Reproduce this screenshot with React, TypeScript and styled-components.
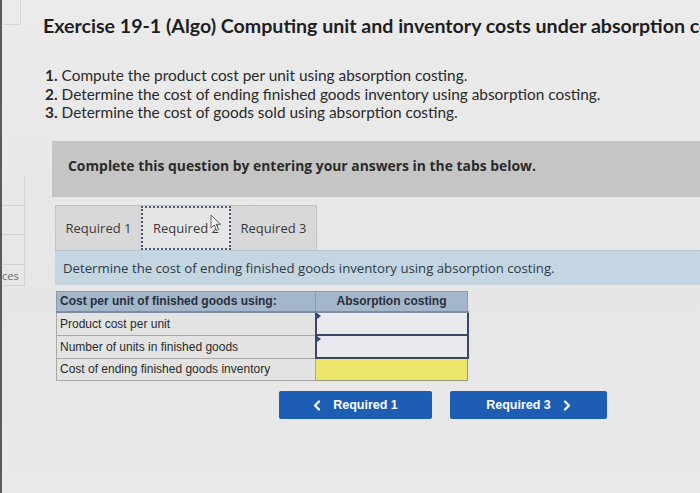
import React from 'react';
import styled, { createGlobalStyle } from 'styled-components';

const GlobalStyle = createGlobalStyle`
	html, body {
		margin: 0;
		padding: 0;
		background: #e7e7e7;
	}
	body {
		width: 700px;
		height: 493px;
		overflow: hidden;
		font-family: 'Lato', 'Liberation Sans', sans-serif;
		color: #222;
	}
`;

const Page = styled.div`
	display: flex;
	height: 493px;
	background: linear-gradient(180deg, #ebebeb 0%, #e6e6e6 60%, #e9e9e9 100%);
`;

const Rail = styled.aside`
	width: 23px;
	flex-shrink: 0;
	border-left: 2px solid #5a5a5a;
	display: flex;
	flex-direction: column;
`;

const RailTop = styled.div`
	height: 24px;
	width: 18px;
	border-right: 1px solid #d6d6d6;
	border-bottom: 1px solid #d6d6d6;
	margin-bottom: 150px;
`;

const RailItem = styled.div<{ $h: number }>`
	height: ${p => p.$h}px;
	border: 1px solid #d2d2d2;
	border-left: none;
	border-top: none;
	font-family: 'Open Sans', 'Liberation Sans', sans-serif;
	font-size: 11px;
	color: #6a6a6a;
	display: flex;
	align-items: center;
	white-space: nowrap;
	&:first-of-type {
		border-top: 1px solid #d2d2d2;
	}
`;

const Main = styled.main`
	flex: 1;
	min-width: 0;
	overflow: hidden;
	padding-top: 13px;
`;

const Title = styled.h1`
	margin: 0 0 0 18px;
	font-size: 19.6px;
	line-height: 26px;
	font-weight: 700;
	color: #1f1f1f;
	white-space: nowrap;
`;

const Steps = styled.ol`
	list-style: none;
	margin: 27px 0 0 20px;
	padding: 0;
	font-size: 15.4px;
	line-height: 18.5px;
	color: #2a2a2a;
`;

const Step = styled.li`
	b {
		font-weight: 700;
		margin-right: 4px;
	}
`;

const Instructions = styled.div`
	margin: 19px 0 0 27px;
	height: 56px;
	background: #c5c5c5;
	display: flex;
	align-items: center;
	padding-left: 16px;
	padding-bottom: 6px;
	box-sizing: border-box;
	font-family: 'Open Sans', 'DejaVu Sans', sans-serif;
	font-weight: 700;
	font-size: 13.9px;
	color: #2b2b2b;
`;

const Workspace = styled.section`
	margin: 8px 0 0 30px;
`;

const Tabs = styled.div`
	display: flex;
	width: 262px;
	height: 45px;
	background: #d8d8d8;
	border: 1px solid #c2c2c2;
	border-bottom: none;
	box-sizing: border-box;
`;

const Tab = styled.div<{ $active?: boolean; $w: number }>`
	position: relative;
	flex: 0 0 ${p => p.$w}px;
	display: flex;
	align-items: center;
	justify-content: center;
	white-space: nowrap;
	font-family: 'Open Sans', 'DejaVu Sans', sans-serif;
	font-size: 13px;
	color: #3a3a3a;
	background: ${p => (p.$active ? '#e6e6e6' : 'transparent')};
	border: ${p => (p.$active ? '2px dotted #4b5670' : '2px solid transparent')};
	box-sizing: border-box;
`;

const Cursor = styled.svg`
	position: absolute;
	left: 67px;
	top: 6px;
`;

const Prompt = styled.div`
	height: 35px;
	background: #c3d6e2;
	display: flex;
	align-items: center;
	padding-left: 8px;
	font-family: 'Open Sans', 'DejaVu Sans', sans-serif;
	font-size: 13.2px;
	color: #2f3a44;
	border-top: 1px solid #b5c8d4;
	box-sizing: border-box;
`;

const Table = styled.table`
	margin: 6px 0 0 1px;
	border-collapse: collapse;
	font-family: 'Liberation Sans', Arial, sans-serif;
	font-size: 12px;
	color: #2a2a2a;
`;

const HeadCell = styled.th<{ $center?: boolean }>`
	height: 21px;
	padding: 0 3px;
	background: #a4b6ca;
	border: 1px solid #8b9bb0;
	border-bottom: 2px solid #7c8ca3;
	text-align: ${p => (p.$center ? 'center' : 'left')};
	font-weight: 700;
	color: #26303f;
	width: ${p => (p.$center ? 152 : 259)}px;
	box-sizing: border-box;
`;

const LabelCell = styled.td`
	height: 21px;
	padding: 0 3px;
	background: #e3e3e3;
	border: 1px solid #a9a9a9;
	white-space: nowrap;
`;

const InputCell = styled.td<{ $filled?: boolean }>`
	position: relative;
	height: 21px;
	padding: 0;
	background: ${p => (p.$filled ? '#ebe56a' : '#eaeaee')};
	border: ${p => (p.$filled ? '1px solid #9a9a80' : '2px solid #3a4766')};
	&::before {
		content: '';
		display: ${p => (p.$filled ? 'none' : 'block')};
		position: absolute;
		left: 0;
		top: 0;
		border-left: 4px solid #2b4a8a;
		border-top: 3px solid transparent;
		border-bottom: 3px solid transparent;
	}
`;

const Nav = styled.div`
	display: flex;
	gap: 18px;
	margin: 10px 0 0 224px;
`;

const NavButton = styled.button<{ $w: number }>`
	width: ${p => p.$w}px;
	height: 28px;
	border: none;
	border-radius: 2px;
	background: #1d5db3;
	color: #fff;
	font-family: 'Liberation Sans', Arial, sans-serif;
	font-weight: 700;
	font-size: 12.5px;
	display: flex;
	align-items: center;
	justify-content: center;
	gap: 12px;
	padding: 0;
	cursor: pointer;
`;

const Chevron = ({ dir }: { dir: 'left' | 'right' }) => (
	<svg width='8' height='11' viewBox='0 0 8 11'>
		<polyline
			points={dir === 'left' ? '6,1.5 2,5.5 6,9.5' : '2,1.5 6,5.5 2,9.5'}
			fill='none'
			stroke='#fff'
			strokeWidth='2.2'
			strokeLinecap='round'
			strokeLinejoin='round'
		/>
	</svg>
);

const rows = [
	{ label: 'Product cost per unit', filled: false },
	{ label: 'Number of units in finished goods', filled: false },
	{ label: 'Cost of ending finished goods inventory', filled: true }
];

const App = () => {
	return (
		<>
			<GlobalStyle />
			<Page>
				<Rail>
					<RailTop />
					<RailItem $h={30} />
					<RailItem $h={28} />
					<RailItem $h={29} />
					<RailItem $h={20}>ces</RailItem>
				</Rail>
				<Main>
					<Title>Exercise 19-1 (Algo) Computing unit and inventory costs under absorption costing</Title>
					<Steps>
						<Step><b>1.</b>Compute the product cost per unit using absorption costing.</Step>
						<Step><b>2.</b>Determine the cost of ending finished goods inventory using absorption costing.</Step>
						<Step><b>3.</b>Determine the cost of goods sold using absorption costing.</Step>
					</Steps>
					<Instructions>Complete this question by entering your answers in the tabs below.</Instructions>
					<Workspace>
						<Tabs>
							<Tab $w={85}>Required 1</Tab>
							<Tab $w={90} $active>
								Required 2
								<Cursor width='12' height='18' viewBox='0 0 12 18'>
									<path d='M1 1 L1 14 L4.2 11 L6.6 16.5 L8.6 15.6 L6.3 10.3 L10.5 10.3 Z' fill='#f2f2f2' stroke='#555' strokeWidth='0.9' strokeLinejoin='round' />
								</Cursor>
							</Tab>
							<Tab $w={85}>Required 3</Tab>
						</Tabs>
						<Prompt>Determine the cost of ending finished goods inventory using absorption costing.</Prompt>
						<Table>
							<thead>
								<tr>
									<HeadCell>Cost per unit of finished goods using:</HeadCell>
									<HeadCell $center>Absorption costing</HeadCell>
								</tr>
							</thead>
							<tbody>
								{rows.map(r => (
									<tr key={r.label}>
										<LabelCell>{r.label}</LabelCell>
										<InputCell $filled={r.filled} />
									</tr>
								))}
							</tbody>
						</Table>
						<Nav>
							<NavButton $w={153}>
								<Chevron dir='left' />
								Required 1
							</NavButton>
							<NavButton $w={157}>
								Required 3
								<Chevron dir='right' />
							</NavButton>
						</Nav>
					</Workspace>
				</Main>
			</Page>
		</>
	);
};

export default App;
